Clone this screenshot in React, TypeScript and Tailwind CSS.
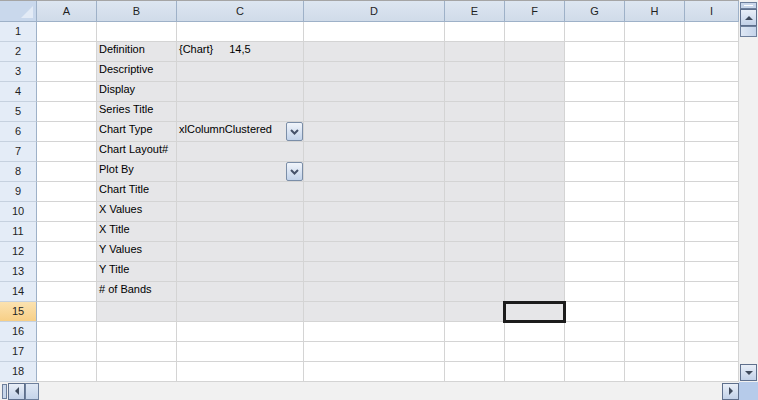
import React from "react";

const cols = [
  { key: "A", w: "w-[60px]" },
  { key: "B", w: "w-[80px]" },
  { key: "C", w: "w-[127px]" },
  { key: "D", w: "w-[141px]" },
  { key: "E", w: "w-[60px]" },
  { key: "F", w: "w-[60px]" },
  { key: "G", w: "w-[60px]" },
  { key: "H", w: "w-[60px]" },
  { key: "I", w: "w-[54px]" },
];

const labels: Record<number, string> = {
  2: "Definition",
  3: "Descriptive",
  4: "Display",
  5: "Series Title",
  6: "Chart Type",
  7: "Chart Layout#",
  8: "Plot By",
  9: "Chart Title",
  10: "X Values",
  11: "X Title",
  12: "Y Values",
  13: "Y Title",
  14: "# of Bands",
};

const shaded = (row: number, col: string) =>
  row >= 2 && row <= 15 && ["B", "C", "D", "E", "F"].includes(col);

const DropButton = () => (
  <div className="ml-auto flex h-[19px] w-[17px] shrink-0 items-center justify-center rounded-[2px] border border-[#7b8ea8] bg-linear-to-b from-[#f1f5fb] to-[#c3d3ea]">
    <svg width="9" height="6" viewBox="0 0 9 6">
      <path d="M1 1 L4.5 4.5 L8 1" stroke="#46526a" strokeWidth="2" fill="none" />
    </svg>
  </div>
);

const CellContent = ({ row, col }: { row: number; col: string }) => {
  if (col === "B" && labels[row]) return <span>{labels[row]}</span>;
  if (col === "C" && row === 2)
    return (
      <span>
        {"{Chart}"}
        <span className="ml-[16px]">14,5</span>
      </span>
    );
  if (col === "C" && row === 6)
    return (
      <>
        <span>xlColumnClustered</span>
        <DropButton />
      </>
    );
  if (col === "C" && row === 8) return <DropButton />;
  return null;
};

const ScrollBtn = ({ dir }: { dir: "up" | "down" | "left" | "right" }) => {
  const pts = {
    up: "1,6 5,2 9,6",
    down: "1,2 5,6 9,2",
    left: "6,1 2,5 6,9",
    right: "2,1 6,5 2,9",
  }[dir];
  const vert = dir === "up" || dir === "down";
  return (
    <div className="flex h-[17px] w-[17px] items-center justify-center border border-[#5e6f8c] bg-linear-to-b from-[#e9eff8] to-[#c2d1e8]">
      <svg width={vert ? 10 : 8} height={vert ? 8 : 10} viewBox={vert ? "0 0 10 8" : "0 0 8 10"}>
        <polygon points={pts} fill="#3f4a5c" />
      </svg>
    </div>
  );
};

export default function App() {
  const rows = Array.from({ length: 18 }, (_, i) => i + 1);
  return (
    <div className="flex h-[400px] w-[758px] flex-col overflow-hidden bg-white font-['Liberation_Sans',Arial,sans-serif] text-[11px] text-black">
      <div className="flex h-[382px]">
        {/* sheet */}
        <div className="flex w-[739px] flex-col">
          {/* column headers */}
          <div className="flex h-[22px] border-t border-[#a5a5a5]">
            <div className="relative w-[37px] border-r border-b border-[#9eb1c8] bg-[#c9d8ec]">
              <svg className="absolute right-[3px] bottom-[3px]" width="12" height="12" viewBox="0 0 12 12">
                <polygon points="12,0 12,12 0,12" fill="#e3ebf6" />
              </svg>
            </div>
            {cols.map((c) => (
              <div
                key={c.key}
                className={`${c.w} flex items-center justify-center border-r border-b border-[#9eb1c8] bg-linear-to-b from-[#dde6f1] to-[#d0dbe9] text-[#1f1f1f]`}
              >
                {c.key}
              </div>
            ))}
          </div>
          {rows.map((r) => (
            <div key={r} className="flex h-[20px]">
              <div
                className={`flex w-[37px] items-center justify-center border-r border-b border-r-[#9eb1c8] border-b-[#c6d1df] text-[#1f1f1f] ${
                  r === 15 ? "bg-linear-to-b from-[#fbe2b0] to-[#f7cf86]" : "bg-[#e4ecf7]"
                }`}
              >
                {r}
              </div>
              {cols.map((c) => (
                <div
                  key={c.key}
                  className={`${c.w} relative flex items-start overflow-visible whitespace-nowrap border-r border-b border-[#d4d4d4] pl-[2px] leading-[14px] ${
                    shaded(r, c.key) ? "bg-[#e6e6e8]" : "bg-white"
                  }`}
                >
                  <CellContent row={r} col={c.key} />
                  {r === 15 && c.key === "F" && (
                    <div className="pointer-events-none absolute -top-[1px] -left-[2px] z-10 h-[22px] w-[63px] border-[3px] border-[#1c1c1c]" />
                  )}
                </div>
              ))}
            </div>
          ))}
        </div>
        {/* vertical scrollbar */}
        <div className="flex w-[19px] flex-col items-center bg-[#f1f1f1] pt-[2px]">
          <div className="flex h-[7px] w-[17px] flex-col items-center justify-center border border-[#6d7f9c] bg-[#c8d6ea]">
            <div className="h-[1px] w-[9px] bg-[#ffffff]" />
          </div>
          <ScrollBtn dir="up" />
          <div className="h-[11px] w-[17px] border border-[#6d7f9c] bg-linear-to-r from-[#dfe8f5] to-[#c5d4ea]" />
          <div className="flex-1" />
          <ScrollBtn dir="down" />
          <div className="h-[1px]" />
        </div>
      </div>
      {/* horizontal scrollbar */}
      <div className="flex h-[18px]">
        <div className="flex w-[739px] items-center bg-[#f1f1f1] pl-[2px]">
          <div className="mr-[1px] h-[15px] w-[5px] border border-[#6d7f9c] bg-[#c8d6ea]" />
          <ScrollBtn dir="left" />
          <div className="h-[17px] w-[14px] border border-[#6d7f9c] bg-linear-to-b from-[#dfe8f5] to-[#c5d4ea]" />
          <div className="flex-1" />
          <ScrollBtn dir="right" />
        </div>
        <div className="w-[19px] bg-[#b6cbea]" />
      </div>
    </div>
  );
}
